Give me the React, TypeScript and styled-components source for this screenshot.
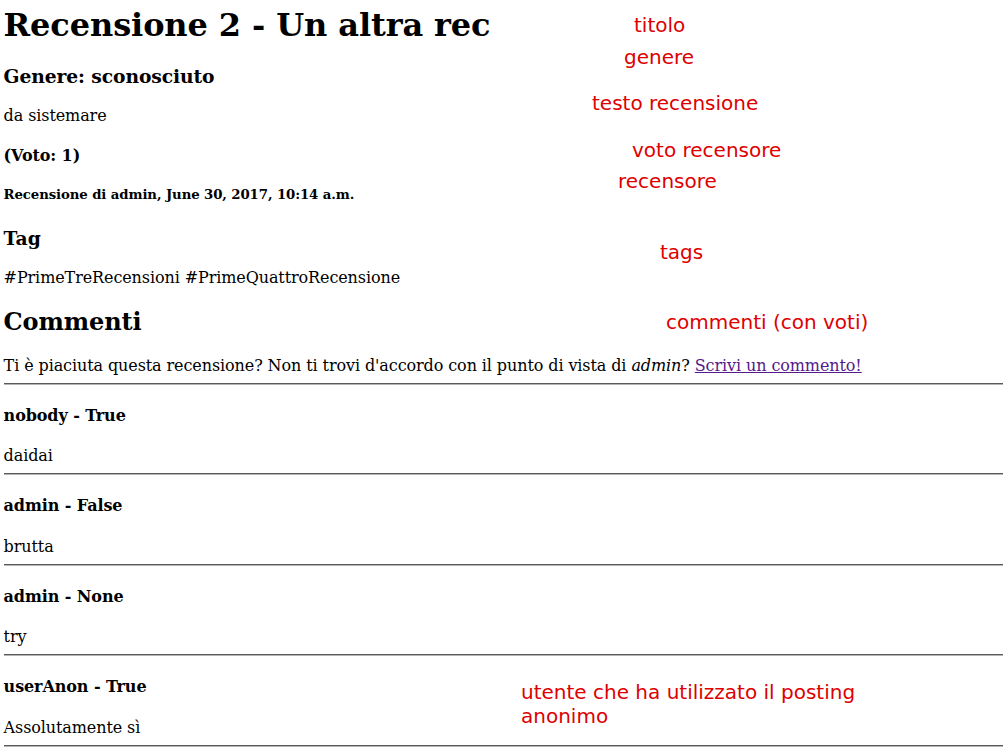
import React from "react";
import styled, { createGlobalStyle } from "styled-components";

const Global = createGlobalStyle`
  html, body { margin: 0; padding: 0; background: #fff; }
  body { font-family: "DejaVu Serif", serif; font-size: 16px; color: #000; }
`;

const Page = styled.div`
  position: relative;
  padding: 0 0 0 3.6px;
  width: 1003px;
  height: 747px;
  overflow: hidden;
  box-sizing: border-box;
  letter-spacing: -0.1px;
`;

const Title = styled.h1`
  font-size: 2em;
  font-weight: bold;
  margin: 5.8px 0 0.67em;
`;

const SubHeading = styled.h3`
  font-size: 1.17em;
  font-weight: bold;
  margin: 1em 0;
`;

const SectionHeading = styled.h2`
  font-size: 1.5em;
  font-weight: bold;
  margin: 0.83em 0;
`;

const Score = styled.h4`
  font-size: 1em;
  font-weight: bold;
  margin: 1.33em 0;
`;

const Byline = styled.h5`
  font-size: 0.83em;
  font-weight: bold;
  margin: 1.67em 0 calc(1.67em + 2.5px);
`;

const Para = styled.p`
  margin: 1em 0;
`;

const Body = styled.div`
  margin: 0;
`;

const Link = styled.a`
  color: #551a8b;
  text-decoration: underline;
`;

const Rule = styled.hr`
  margin: 8px 0;
  border: 0;
  border-top: 1px solid #5a5a5a;
  border-bottom: 1px solid #b4b4b4;
  height: 0;
`;

const Note = styled.div<{ $x: number; $y: number }>`
  position: absolute;
  left: ${(p) => p.$x}px;
  top: ${(p) => p.$y}px;
  font-family: "DejaVu Sans", sans-serif;
  font-size: 20px;
  line-height: 24px;
  letter-spacing: 0;
  color: #dd0000;
  white-space: nowrap;
`;

const comments = [
  { user: "nobody", vote: "True", text: "daidai" },
  { user: "admin", vote: "False", text: "brutta" },
  { user: "admin", vote: "None", text: "try" },
  { user: "userAnon", vote: "True", text: "Assolutamente sì" },
];

const notes = [
  { x: 634, y: 13, text: "titolo" },
  { x: 624, y: 45, text: "genere" },
  { x: 592, y: 91, text: "testo recensione" },
  { x: 632, y: 138, text: "voto recensore" },
  { x: 618, y: 169, text: "recensore" },
  { x: 660, y: 240, text: "tags" },
  { x: 666, y: 310, text: "commenti (con voti)" },
];

export default function App() {
  return (
    <>
      <Global />
      <Page>
        <Title>Recensione 2 - Un altra rec</Title>
        <SubHeading>Genere: sconosciuto</SubHeading>
        <Para>da sistemare</Para>
        <Score>(Voto: 1)</Score>
        <Byline>Recensione di admin, June 30, 2017, 10:14 a.m.</Byline>
        <SubHeading>Tag</SubHeading>
        <Para>#PrimeTreRecensioni #PrimeQuattroRecensione</Para>
        <SectionHeading>Commenti</SectionHeading>
        <Body>
          Ti è piaciuta questa recensione? Non ti trovi d'accordo con il punto di vista di{" "}
          <em>admin</em>? <Link href="#">Scrivi un commento!</Link>
        </Body>
        {comments.map((c, i) => (
          <React.Fragment key={i}>
            <Rule />
            <Score>
              {c.user} - {c.vote}
            </Score>
            <Body>{c.text}</Body>
          </React.Fragment>
        ))}
        <Rule />
        {notes.map((n) => (
          <Note key={n.text} $x={n.x} $y={n.y}>
            {n.text}
          </Note>
        ))}
        <Note $x={521} $y={680}>
          utente che ha utilizzato il posting
          <br />
          anonimo
        </Note>
      </Page>
    </>
  );
}
